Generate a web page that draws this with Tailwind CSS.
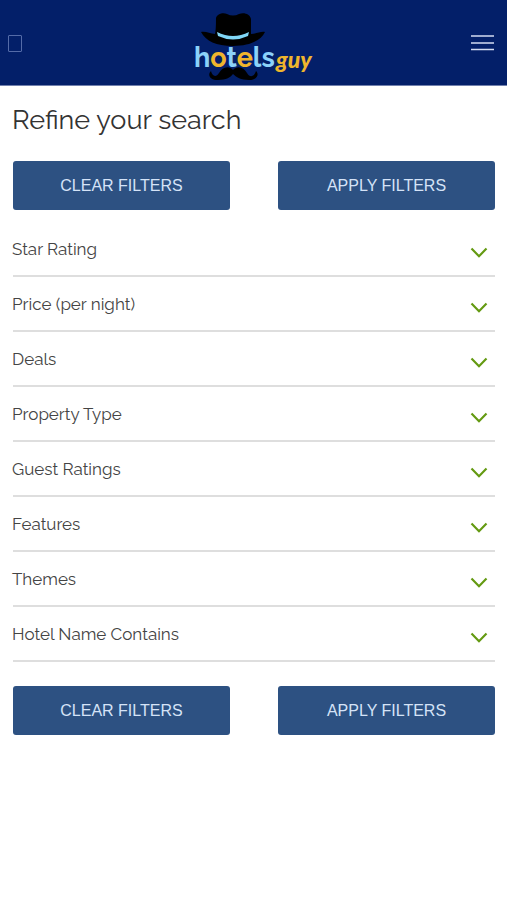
<!DOCTYPE html>
<html lang="en">
<head>
<meta charset="utf-8">
<meta name="viewport" content="width=device-width, initial-scale=1">
<title>hotelsguy - Refine your search</title>
<script src="https://cdn.jsdelivr.net/npm/@tailwindcss/browser@4"></script>
</head>
<body class="min-h-screen bg-white font-['Raleway','Lato',sans-serif] text-[#444444]">
<svg class="hidden" aria-hidden="true">
  <symbol id="chevron" viewBox="0 0 18 12"><path d="M1.500 1.500 9 9.200 16.500 1.500" fill="none" stroke="#649a12" stroke-width="2.200"/></symbol>
</svg>
<header class="grid h-[86px] grid-cols-[1fr_auto_1fr] items-center border-b border-[#7180ad] bg-[#031f69] px-2">
  <button type="button" aria-label="Back" class="h-[17px] w-[14px] rounded-[1px] border border-[#546ba8]"></button>
  <a href="#" aria-label="hotelsguy home" class="block">
    <svg class="block h-[86px] w-[124px]" viewBox="0 0 124 86">
      <path d="M9 32C14 31 18 34 23 34Q24 30 24 18C25 14 31 12 35 14Q41 17 47 14C52 12 58 14 59 19L59 34C64 34 69 31 73 32C69 40 59 46 41 46C24 46 14 41 9 32Z" fill="#000"/>
      <path d="M25 32Q41 40 57 32L56 36Q41 43 26 36Z" fill="#80d6f6"/>
      <path d="M41 70C37 65 30 67 27 73C24 78 20 76 19 71C15 75 18 80 26 80C34 80 39 77 41 74C44 77 49 80 57 80C64 80 68 75 64 71C62 77 58 78 55 73C52 67 45 65 41 70Z" fill="#000"/>
      <text x="2" y="67" font-family="Raleway, Lato, sans-serif" font-weight="700" font-size="27" fill="#8bd2fa">h<tspan fill="#efb52d">o</tspan>t<tspan fill="#efb52d">e</tspan>ls</text>
      <text x="84" y="68" font-family="Lato, sans-serif" font-style="italic" font-weight="900" font-size="23" fill="#efb52d">guy</text>
    </svg>
  </a>
  <button type="button" aria-label="Menu" class="mr-[5px] justify-self-end">
    <svg class="block h-4 w-[23px]" viewBox="0 0 23 16"><path d="M0 1H23M0 8H23M0 14.500H23" stroke="#d3dcf2" stroke-width="1.700"/></svg>
  </button>
</header>
<main class="pr-3 pl-[13px]">
  <h1 class="-ml-px pt-4 text-[27px] leading-9 text-[#333333]">Refine your search</h1>
  <div class="mt-[23px] grid grid-cols-2 gap-12 font-['Liberation_Sans',sans-serif] text-[16px] text-[#d5e3f7]">
    <button type="button" class="h-[49px] rounded-[3px] bg-[#2d5182]">CLEAR FILTERS</button>
    <button type="button" class="h-[49px] rounded-[3px] bg-[#2d5182]">APPLY FILTERS</button>
  </div>
  <div class="mt-3 text-[17px]">
    <button type="button" aria-expanded="false" class="flex h-[55px] w-full items-center justify-between border-b-2 border-[#dedede] pt-[2px] pr-[7px] text-left"><span class="-ml-px">Star Rating</span><svg class="mt-1.5 h-3 w-[18px]"><use href="#chevron"/></svg></button>
    <button type="button" aria-expanded="false" class="flex h-[55px] w-full items-center justify-between border-b-2 border-[#dedede] pt-[2px] pr-[7px] text-left"><span class="-ml-px">Price (per night)</span><svg class="mt-1.5 h-3 w-[18px]"><use href="#chevron"/></svg></button>
    <button type="button" aria-expanded="false" class="flex h-[55px] w-full items-center justify-between border-b-2 border-[#dedede] pt-[2px] pr-[7px] text-left"><span class="-ml-px">Deals</span><svg class="mt-1.5 h-3 w-[18px]"><use href="#chevron"/></svg></button>
    <button type="button" aria-expanded="false" class="flex h-[55px] w-full items-center justify-between border-b-2 border-[#dedede] pt-[2px] pr-[7px] text-left"><span class="-ml-px">Property Type</span><svg class="mt-1.5 h-3 w-[18px]"><use href="#chevron"/></svg></button>
    <button type="button" aria-expanded="false" class="flex h-[55px] w-full items-center justify-between border-b-2 border-[#dedede] pt-[2px] pr-[7px] text-left"><span class="-ml-px">Guest Ratings</span><svg class="mt-1.5 h-3 w-[18px]"><use href="#chevron"/></svg></button>
    <button type="button" aria-expanded="false" class="flex h-[55px] w-full items-center justify-between border-b-2 border-[#dedede] pt-[2px] pr-[7px] text-left"><span class="-ml-px">Features</span><svg class="mt-1.5 h-3 w-[18px]"><use href="#chevron"/></svg></button>
    <button type="button" aria-expanded="false" class="flex h-[55px] w-full items-center justify-between border-b-2 border-[#dedede] pt-[2px] pr-[7px] text-left"><span class="-ml-px">Themes</span><svg class="mt-1.5 h-3 w-[18px]"><use href="#chevron"/></svg></button>
    <button type="button" aria-expanded="false" class="flex h-[55px] w-full items-center justify-between border-b-2 border-[#dedede] pt-[2px] pr-[7px] text-left"><span class="-ml-px">Hotel Name Contains</span><svg class="mt-1.5 h-3 w-[18px]"><use href="#chevron"/></svg></button>
  </div>
  <div class="mt-6 grid grid-cols-2 gap-12 font-['Liberation_Sans',sans-serif] text-[16px] text-[#d5e3f7]">
    <button type="button" class="h-[49px] rounded-[3px] bg-[#2d5182]">CLEAR FILTERS</button>
    <button type="button" class="h-[49px] rounded-[3px] bg-[#2d5182]">APPLY FILTERS</button>
  </div>
</main>
</body>
</html>
